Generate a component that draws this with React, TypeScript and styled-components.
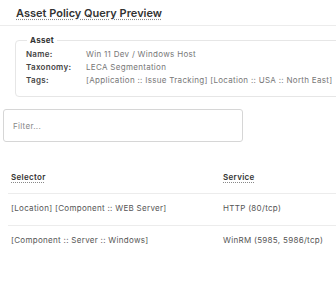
import styled, { createGlobalStyle } from "styled-components";

const GlobalStyle = createGlobalStyle`
  html, body {
    margin: 0;
    padding: 0;
    background: #fff;
    overflow: hidden;
  }
  body {
    font-family: Inter, "Open Sans", sans-serif;
    color: #333;
  }
`;

interface Rule {
  selector: string;
  service: string;
}

const rules: Rule[] = [
  { selector: "[Location] [Component :: WEB Server]", service: "HTTP (80/tcp)" },
  { selector: "[Component :: Server :: Windows]", service: "WinRM (5985, 5986/tcp)" },
];

const App = () => {
  return (
    <Page>
      <GlobalStyle />
      <Header>
        <Title>Asset Policy Query Preview</Title>
      </Header>

      <AssetBox>
        <Legend>Asset</Legend>
        <InfoGrid>
          <Label>Name:</Label>
          <Value>Win 11 Dev / Windows Host</Value>
          <Label>Taxonomy:</Label>
          <Value>LECA Segmentation</Value>
          <Label>Tags:</Label>
          <Value>[Application :: Issue Tracking] [Location :: USA :: North East]</Value>
        </InfoGrid>
      </AssetBox>

      <FilterInput placeholder="Filter..." />

      <Table>
        <thead>
          <tr>
            <HeadCell $width="206px">
              <HeadText>Selector</HeadText>
            </HeadCell>
            <HeadCell>
              <HeadText>Service</HeadText>
            </HeadCell>
          </tr>
        </thead>
        <tbody>
          {rules.map((rule) => (
            <tr key={rule.selector}>
              <Cell>{rule.selector}</Cell>
              <Cell>{rule.service}</Cell>
            </tr>
          ))}
        </tbody>
      </Table>
    </Page>
  );
};

export default App;

const Page = styled.div`
  width: 336px;
  height: 281px;
  overflow: hidden;
  letter-spacing: 0.3px;
`;

const Header = styled.div`
  height: 25px;
  padding-left: 16px;
  border-bottom: 1px solid #ececec;
  display: flex;
  align-items: center;
`;

const Title = styled.h1`
  margin: 0;
  font-size: 11px;
  font-weight: 600;
  letter-spacing: 0;
  color: #333;
  text-decoration: underline dotted #888;
  text-underline-offset: 2px;
`;

const AssetBox = styled.fieldset`
  margin: 9px 0 0 15px;
  width: 340px;
  box-sizing: border-box;
  padding: 5px 10px 11px 10px;
  border: 1px solid #e6e6e6;
  border-radius: 4px;
`;

const Legend = styled.legend`
  padding: 0 3px;
  margin-left: 1px;
  font-size: 8px;
  font-weight: 700;
  color: #333;
`;

const InfoGrid = styled.div`
  display: grid;
  grid-template-columns: 60px 1fr;
  row-gap: 4px;
  font-size: 8px;
  line-height: 9px;
`;

const Label = styled.div`
  font-weight: 600;
  color: #444;
`;

const Value = styled.div`
  color: #777;
  white-space: nowrap;
`;

const FilterInput = styled.input`
  display: block;
  margin: 12px 0 0 3px;
  width: 240px;
  height: 33px;
  box-sizing: border-box;
  padding: 0 9px;
  border: 1px solid #d6d6d6;
  border-radius: 3px;
  font-family: inherit;
  font-size: 8px;
  letter-spacing: 0.3px;
  color: #333;
  outline: none;

  &::placeholder {
    color: #888;
  }
`;

const Table = styled.table`
  margin: 30px 0 0 8px;
  width: 340px;
  border-collapse: collapse;
  font-size: 8px;
`;

const HeadCell = styled.th<{ $width?: string }>`
  width: ${({ $width }) => $width || "auto"};
  text-align: left;
  padding: 0 3px 11px 3px;
  border-bottom: 1px solid #ececec;
`;

const HeadText = styled.span`
  font-weight: 600;
  color: #333;
  text-decoration: underline dotted #888;
  text-underline-offset: 2px;
`;

const Cell = styled.td`
  padding: 9px 3px 12px 3px;
  color: #555;
  border-bottom: 1px solid #ececec;
  white-space: nowrap;

  tr:last-child > & {
    border-bottom: none;
  }
`;
